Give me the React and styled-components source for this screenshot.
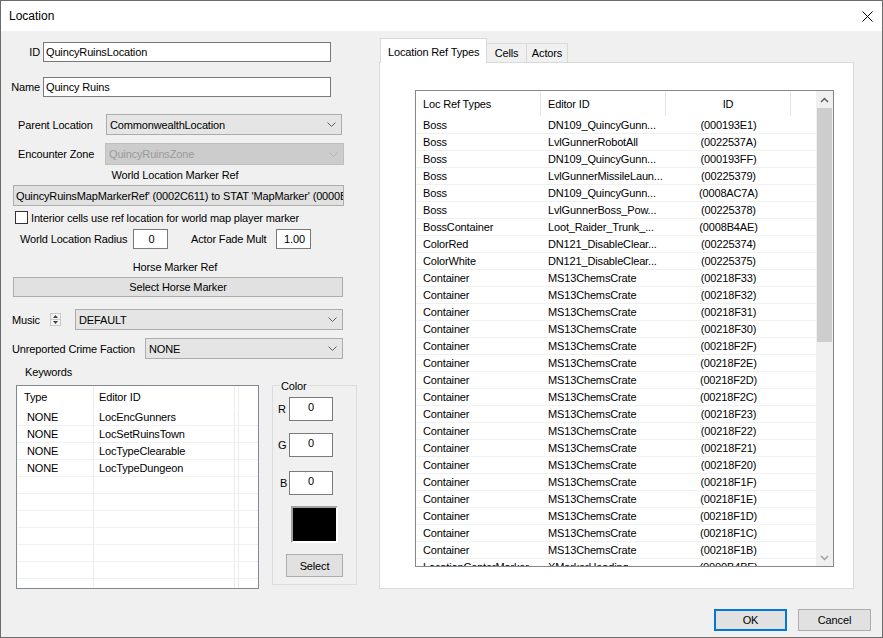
import styled, { createGlobalStyle } from 'styled-components';

const GlobalStyle = createGlobalStyle`
  * { box-sizing: border-box; }
  html, body { margin: 0; padding: 0; background: #ffffff; }
  body {
    font-family: 'Liberation Sans', Arial, sans-serif;
    font-size: 11px;
    letter-spacing: -0.15px;
    color: #000000;
  }
`;

const Window = styled.div`
  width: 883px;
  height: 638px;
  display: flex;
  flex-direction: column;
  background: #f0f0f0;
  border: 1px solid #6b6b6b;
  overflow: hidden;
`;

const TitleBar = styled.div`
  height: 30px;
  flex-shrink: 0;
  display: flex;
  align-items: center;
  justify-content: space-between;
  padding: 0 9px 0 8px;
  background: #ffffff;
  font-size: 12px;
  letter-spacing: 0;
`;

const Main = styled.div`
  height: 558px;
  flex-shrink: 0;
  display: flex;
  align-items: flex-start;
`;

const LeftColumn = styled.div`
  width: 378px;
  flex-shrink: 0;
  display: flex;
  flex-direction: column;
`;

const Row = styled.div`
  display: flex;
  align-items: center;
  height: ${(p) => p.$h ?? 20}px;
  margin-top: ${(p) => p.$mt ?? 0}px;
  padding-left: ${(p) => p.$pl ?? 0}px;
`;

const Label = styled.span`
  flex-shrink: 0;
  width: ${(p) => (p.$w ? `${p.$w}px` : 'auto')};
  margin-left: ${(p) => p.$ml ?? 0}px;
  text-align: ${(p) => (p.$right ? 'right' : 'left')};
  white-space: nowrap;
`;

const TextBox = styled.div`
  flex-shrink: 0;
  width: ${(p) => p.$w}px;
  height: 100%;
  margin-left: ${(p) => p.$ml ?? 0}px;
  display: flex;
  align-items: ${(p) => (p.$top ? 'flex-start' : 'center')};
  justify-content: ${(p) => (p.$center ? 'center' : 'flex-start')};
  padding: ${(p) => (p.$top ? '3px 0 0' : '0 0 0 2px')};
  background: #ffffff;
  border: 1px solid #7a7a7a;
  white-space: nowrap;
`;

const ComboBox = styled.div`
  flex-shrink: 0;
  width: ${(p) => p.$w}px;
  height: 100%;
  margin-left: ${(p) => p.$ml ?? 0}px;
  display: flex;
  align-items: center;
  justify-content: space-between;
  padding: 0 5px 0 3px;
  background: ${(p) => (p.$disabled ? '#cccccc' : '#e5e5e5')};
  border: 1px solid ${(p) => (p.$disabled ? '#bfbfbf' : '#acacac')};
  color: ${(p) => (p.$disabled ? '#9a9a9a' : '#000000')};
  white-space: nowrap;
`;

const Caption = styled.div`
  width: 348px;
  height: 14px;
  line-height: 14px;
  margin-top: ${(p) => p.$mt ?? 0}px;
  text-align: center;
`;

const PushButton = styled.button`
  flex-shrink: 0;
  width: ${(p) => p.$w}px;
  height: ${(p) => p.$h ?? 20}px;
  margin: ${(p) => p.$mt ?? 0}px 0 0 ${(p) => p.$ml ?? 0}px;
  padding: ${(p) => (p.$left ? '0 0 0 2px' : '0')};
  display: flex;
  align-items: center;
  justify-content: ${(p) => (p.$left ? 'flex-start' : 'center')};
  overflow: hidden;
  white-space: nowrap;
  font: inherit;
  letter-spacing: inherit;
  color: #000000;
  background: #e1e1e1;
  border: 1px solid ${(p) => (p.$default ? '#0078d7' : '#adadad')};
  box-shadow: ${(p) => (p.$default ? 'inset 0 0 0 1px #0078d7' : 'none')};
`;

const CheckBox = styled.span`
  width: 13px;
  height: 13px;
  flex-shrink: 0;
  background: #ffffff;
  border: 1px solid #333333;
`;

const BottomRow = styled.div`
  display: flex;
  align-items: flex-start;
  margin-top: 6px;
  padding-left: 15px;
`;

const KeywordsColumn = styled.div`
  width: 243px;
  display: flex;
  flex-direction: column;
`;

const SectionLabel = styled.div`
  height: 14px;
  line-height: 14px;
  padding-left: 9px;
`;

const KeywordList = styled.div`
  height: 204px;
  margin-top: 6px;
  background: #ffffff;
  border: 1px solid #828790;
  overflow: hidden;
`;

const KeywordLine = styled.div`
  display: grid;
  grid-template-columns: 77px 141px 4px 1fr;
  height: ${(p) => (p.$header ? 23 : 17)}px;
  border-bottom: 1px solid ${(p) => (p.$header ? 'transparent' : '#f0f0f0')};
`;

const KeywordCell = styled.div`
  display: flex;
  align-items: center;
  padding-left: ${(p) => p.$pl ?? 0}px;
  border-right: ${(p) => (p.$last ? 'none' : '1px solid #ececec')};
  white-space: nowrap;
`;

const ColorGroup = styled.div`
  width: 85px;
  height: 200px;
  margin: 20px 0 0 13px;
  display: flex;
  flex-direction: column;
  border: 1px solid #dcdcdc;
`;

const Legend = styled.span`
  align-self: flex-start;
  height: 14px;
  line-height: 14px;
  margin: -7px 0 0 7px;
  padding: 0 1px;
  background: #f0f0f0;
`;

const Swatch = styled.div`
  width: 47px;
  height: 37px;
  margin: 11px 0 0 18px;
  background: #000000;
  border-top: 2px solid #a0a0a0;
  border-left: 2px solid #a0a0a0;
  border-right: 2px solid #ffffff;
  border-bottom: 2px solid #ffffff;
`;

const TabArea = styled.div`
  width: 475px;
  flex-shrink: 0;
  margin-top: 7px;
  display: flex;
  flex-direction: column;
`;

const TabStrip = styled.div`
  height: 25px;
  display: flex;
  align-items: flex-end;
  padding-left: 1px;
  margin-bottom: -1px;
  position: relative;
  z-index: 1;
`;

const Tab = styled.div`
  width: ${(p) => p.$w}px;
  height: ${(p) => (p.$active ? 25 : 19)}px;
  margin-bottom: ${(p) => (p.$active ? 0 : 1)}px;
  display: flex;
  align-items: center;
  justify-content: ${(p) => (p.$active ? 'flex-start' : 'center')};
  padding: ${(p) => (p.$active ? '2px 0 0 7px' : '0')};
  background: ${(p) => (p.$active ? '#ffffff' : '#f0f0f0')};
  border: 1px solid #d9d9d9;
  border-bottom: none;
  border-left: ${(p) => (p.$active ? '1px solid #d9d9d9' : 'none')};
  white-space: nowrap;
`;

const TabPanel = styled.div`
  height: 527px;
  padding: 27px 19px 0 35px;
  background: #ffffff;
  border: 1px solid #d9d9d9;
`;

const RefTable = styled.div`
  width: 419px;
  height: 477px;
  display: flex;
  background: #ffffff;
  border: 1px solid #828790;
`;

const RefBody = styled.div`
  flex: 1;
  overflow: hidden;
  display: flex;
  flex-direction: column;
`;

const RefLine = styled.div`
  flex-shrink: 0;
  display: grid;
  grid-template-columns: 125px 125px 125px 1fr;
  height: ${(p) => (p.$header ? 26 : 17)}px;
  border-bottom: 1px solid ${(p) => (p.$header ? 'transparent' : '#f0f0f0')};
`;

const RefCell = styled.div`
  display: flex;
  align-items: center;
  justify-content: ${(p) => (p.$center ? 'center' : 'flex-start')};
  padding-left: ${(p) => (p.$center ? 0 : 7)}px;
  border-right: ${(p) => (p.$sep ? '1px solid #e5e5e5' : 'none')};
  white-space: nowrap;
  overflow: hidden;
`;

const ScrollBar = styled.div`
  width: 17px;
  flex-shrink: 0;
  display: flex;
  flex-direction: column;
  background: #f0f0f0;
`;

const ScrollArrow = styled.div`
  height: 17px;
  flex-shrink: 0;
  display: flex;
  align-items: center;
  justify-content: center;
  margin-top: ${(p) => (p.$bottom ? 'auto' : '0')};
`;

const ScrollThumb = styled.div`
  height: 234px;
  margin: 0 1px;
  background: #cdcdcd;
`;

const Footer = styled.div`
  display: flex;
  justify-content: flex-end;
  gap: 11px;
  padding: 20px 11px 0 0;
`;

const Chevron = ({ color = '#606060' }) => (
  <svg width="9" height="5" viewBox="0 0 9 5">
    <path d="M0.5 0.5 L4.5 4.5 L8.5 0.5" fill="none" stroke={color} strokeWidth="1" />
  </svg>
);

const ScrollChevron = ({ up }) => (
  <svg width="9" height="6" viewBox="0 0 9 6">
    <path
      d={up ? 'M1 5 L4.5 1.5 L8 5' : 'M1 1 L4.5 4.5 L8 1'}
      fill="none"
      stroke={up ? '#606060' : '#a0a0a0'}
      strokeWidth="1.5"
    />
  </svg>
);

const Spinner = () => (
  <svg width="15" height="15" viewBox="0 0 15 15">
    <rect x="2.5" y="1.5" width="10" height="12" fill="#f4f4f4" stroke="#c8c8c8" />
    <line x1="3" y1="7.5" x2="12" y2="7.5" stroke="#c8c8c8" />
    <path d="M5 6 L7.5 3 L10 6 Z" fill="#404040" />
    <path d="M5 9 L7.5 12 L10 9 Z" fill="#404040" />
  </svg>
);

const CloseIcon = () => (
  <svg width="11" height="11" viewBox="0 0 11 11">
    <path d="M0.5 0.5 L10.5 10.5 M10.5 0.5 L0.5 10.5" stroke="#000000" strokeWidth="1" />
  </svg>
);

const keywords = [
  ['NONE', 'LocEncGunners'],
  ['NONE', 'LocSetRuinsTown'],
  ['NONE', 'LocTypeClearable'],
  ['NONE', 'LocTypeDungeon'],
];

const refTypes = [
  ['Boss', 'DN109_QuincyGunn...', '(000193E1)'],
  ['Boss', 'LvlGunnerRobotAll', '(0022537A)'],
  ['Boss', 'DN109_QuincyGunn...', '(000193FF)'],
  ['Boss', 'LvlGunnerMissileLaun...', '(00225379)'],
  ['Boss', 'DN109_QuincyGunn...', '(0008AC7A)'],
  ['Boss', 'LvlGunnerBoss_Pow...', '(00225378)'],
  ['BossContainer', 'Loot_Raider_Trunk_...', '(0008B4AE)'],
  ['ColorRed', 'DN121_DisableClear...', '(00225374)'],
  ['ColorWhite', 'DN121_DisableClear...', '(00225375)'],
  ...['33', '32', '31', '30', '2F', '2E', '2D', '2C', '23', '22', '21', '20', '1F', '1E', '1D', '1C', '1B'].map(
    (s) => ['Container', 'MS13ChemsCrate', `(00218F${s})`]
  ),
  ['LocationCenterMarker', 'XMarkerHeading', '(0000B4BF)'],
];

const ColorField = ({ name, mt, pl }) => (
  <Row $h={24} $mt={mt} $pl={pl}>
    <Label $w={11 + 5 - pl}>{name}</Label>
    <TextBox $w={44} $center $top>0</TextBox>
  </Row>
);

export default function App() {
  return (
    <>
      <GlobalStyle />
      <Window>
        <TitleBar>
          <span>Location</span>
          <CloseIcon />
        </TitleBar>

        <Main>
          <LeftColumn>
            <Row $mt={11}>
              <Label $w={39} $right>ID</Label>
              <TextBox $w={288} $ml={3}>QuincyRuinsLocation</TextBox>
            </Row>
            <Row $mt={15}>
              <Label $w={39} $right>Name</Label>
              <TextBox $w={288} $ml={3}>Quincy Ruins</TextBox>
            </Row>
            <Row $mt={17} $h={21} $pl={17}>
              <Label $w={88}>Parent Location</Label>
              <ComboBox $w={236}>
                CommonwealthLocation
                <Chevron />
              </ComboBox>
            </Row>
            <Row $mt={8} $h={22} $pl={17}>
              <Label $w={87}>Encounter Zone</Label>
              <ComboBox $w={239} $disabled>
                QuincyRuinsZone
                <Chevron color="#b0b0b0" />
              </ComboBox>
            </Row>

            <Caption $mt={3}>World Location Marker Ref</Caption>
            <PushButton $w={331} $h={21} $mt={3} $ml={12} $left>
              QuincyRuinsMapMarkerRef' (0002C611) to STAT 'MapMarker' (0000B4BF)
            </PushButton>

            <Row $mt={5} $h={13} $pl={14}>
              <CheckBox />
              <Label $ml={3}>Interior cells use ref location for world map player marker</Label>
            </Row>
            <Row $mt={5} $pl={19}>
              <Label $w={113}>World Location Radius</Label>
              <TextBox $w={35} $center>0</TextBox>
              <Label $w={85} $ml={23}>Actor Fade Mult</Label>
              <TextBox $w={35} $center>1.00</TextBox>
            </Row>

            <Caption $mt={11}>Horse Marker Ref</Caption>
            <PushButton $w={330} $mt={3} $ml={12}>Select Horse Marker</PushButton>

            <Row $mt={12} $h={21} $pl={11}>
              <Label $w={36}>Music</Label>
              <Spinner />
              <ComboBox $w={268} $ml={12}>
                DEFAULT
                <Chevron />
              </ComboBox>
            </Row>
            <Row $mt={8} $h={21} $pl={11}>
              <Label $w={133}>Unreported Crime Faction</Label>
              <ComboBox $w={198}>
                NONE
                <Chevron />
              </ComboBox>
            </Row>

            <BottomRow>
              <KeywordsColumn>
                <SectionLabel>Keywords</SectionLabel>
                <KeywordList>
                  <KeywordLine $header>
                    <KeywordCell $pl={7}>Type</KeywordCell>
                    <KeywordCell $pl={5}>Editor ID</KeywordCell>
                    <KeywordCell />
                    <KeywordCell $last />
                  </KeywordLine>
                  {Array.from({ length: 11 }, (_, i) => keywords[i] || ['', '']).map(([type, id], i) => (
                    <KeywordLine key={i}>
                      <KeywordCell $pl={10}>{type}</KeywordCell>
                      <KeywordCell $pl={5}>{id}</KeywordCell>
                      <KeywordCell />
                      <KeywordCell $last />
                    </KeywordLine>
                  ))}
                </KeywordList>
              </KeywordsColumn>

              <ColorGroup>
                <Legend>Color</Legend>
                <ColorField name="R" mt={4} pl={5} />
                <ColorField name="G" mt={12} pl={5} />
                <ColorField name="B" mt={14} pl={7} />
                <Swatch />
                <PushButton $w={57} $h={23} $mt={11} $ml={13}>Select</PushButton>
              </ColorGroup>
            </BottomRow>
          </LeftColumn>

          <TabArea>
            <TabStrip>
              <Tab $w={107} $active>Location Ref Types</Tab>
              <Tab $w={40}>Cells</Tab>
              <Tab $w={41}>Actors</Tab>
            </TabStrip>
            <TabPanel>
              <RefTable>
                <RefBody>
                  <RefLine $header>
                    <RefCell $sep>Loc Ref Types</RefCell>
                    <RefCell $sep>Editor ID</RefCell>
                    <RefCell $sep $center>ID</RefCell>
                    <RefCell />
                  </RefLine>
                  {refTypes.map(([type, editorId, id], i) => (
                    <RefLine key={i}>
                      <RefCell>{type}</RefCell>
                      <RefCell>{editorId}</RefCell>
                      <RefCell $center>{id}</RefCell>
                      <RefCell />
                    </RefLine>
                  ))}
                </RefBody>
                <ScrollBar>
                  <ScrollArrow>
                    <ScrollChevron up />
                  </ScrollArrow>
                  <ScrollThumb />
                  <ScrollArrow $bottom>
                    <ScrollChevron />
                  </ScrollArrow>
                </ScrollBar>
              </RefTable>
            </TabPanel>
          </TabArea>
        </Main>

        <Footer>
          <PushButton $w={73} $h={22} $default>OK</PushButton>
          <PushButton $w={73} $h={22}>Cancel</PushButton>
        </Footer>
      </Window>
    </>
  );
}
